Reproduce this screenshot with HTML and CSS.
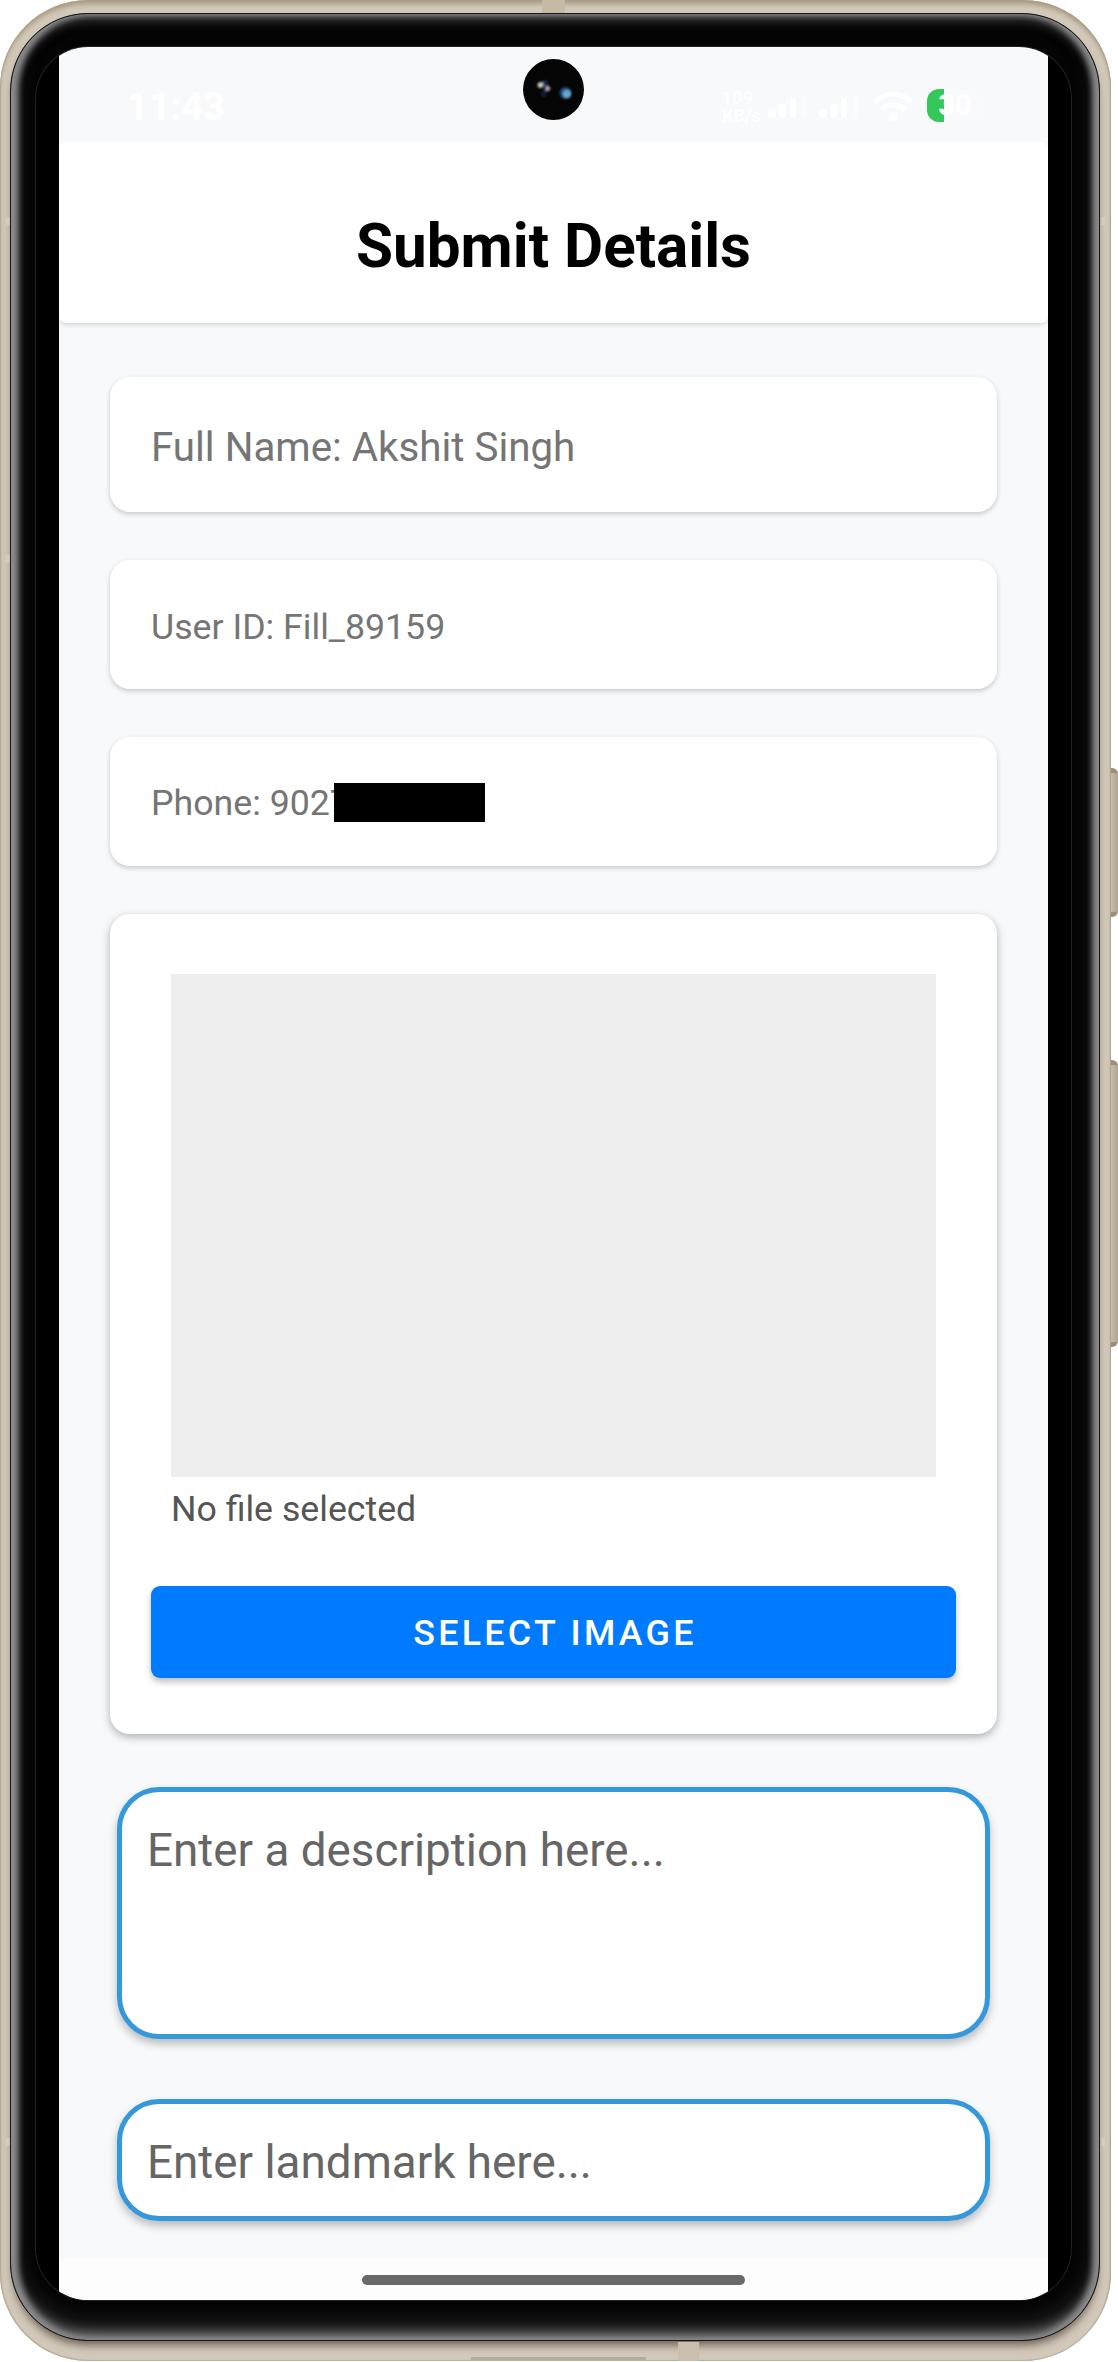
FILE: index.html
```html
<!DOCTYPE html>
<html lang="en">
<head>
<meta charset="utf-8">
<title>Submit Details</title>
<link rel="stylesheet" href="styles.css">
</head>
<body>
<div class="phone">
  <i class="key key-power"></i>
  <i class="key key-volume"></i>
  <i class="band band-top"></i>
  <i class="band band-bottom"></i>
  <i class="band band-port"></i>
  <i class="notch notch-l1"></i><i class="notch notch-l2"></i><i class="notch notch-l3"></i>
  <i class="notch notch-r1"></i><i class="notch notch-r3"></i>
  <div class="bezel">
    <div class="glass">
      <div class="screen">
        <div class="status">
          <span class="clock">11:43</span>
          <div class="indicators">
            <span class="speed">109<br>KB/s</span>
            <svg class="signal" width="40" height="26" viewBox="0 0 40 26"><rect x="0" y="15" width="8" height="9" rx="4"/><rect x="11" y="10" width="7" height="14" rx="3"/><rect x="22" y="4" width="6" height="20" rx="3"/><rect class="dim" x="34" y="0" width="5" height="24" rx="2.500"/></svg>
            <svg class="signal" width="40" height="26" viewBox="0 0 40 26"><rect x="0" y="15" width="8" height="9" rx="4"/><rect x="11" y="10" width="7" height="14" rx="3"/><rect x="22" y="4" width="6" height="20" rx="3"/><rect class="dim" x="34" y="0" width="5" height="24" rx="2.500"/></svg>
            <svg class="wifi" width="42" height="32" viewBox="0 0 42 32"><g fill="none" stroke="#fff" stroke-width="5"><path d="M2 11Q21-5 40 11"/><path d="M9 19Q21 8 33 19"/></g><circle cx="21" cy="25.500" r="4.500" fill="#fff"/></svg>
            <span class="battery">30</span>
          </div>
          <svg class="camera" width="61" height="61" viewBox="0 0 61 61">
            <defs><filter id="soft"><feGaussianBlur stdDeviation="1.3"/></filter></defs>
            <circle cx="30.5" cy="30.5" r="30.5" fill="#050505"/>
            <g filter="url(#soft)"><circle cx="22" cy="24" r="3" fill="#14284f"/><circle cx="21" cy="35" r="3" fill="#0d1d40"/><circle cx="17.500" cy="26" r="3" fill="#b6c6be"/><circle cx="24.500" cy="29.500" r="2.800" fill="#a596b4"/><circle cx="42.500" cy="34" r="6" fill="#234a80"/><circle cx="44" cy="35" r="4" fill="#66a9d0"/></g>
          </svg>
        </div>
        <header class="header"><h1>Submit Details</h1></header>
        <main class="content">
          <div class="card card-name">Full Name: Akshit Singh</div>
          <div class="card">User ID: Fill_89159</div>
          <div class="card card-phone">Phone: <span class="number">9027<i class="redact"></i></span></div>
          <section class="card upload">
            <div class="preview"></div>
            <p class="file">No file selected</p>
            <button class="select">SELECT IMAGE</button>
          </section>
          <div class="field description">Enter a description here...</div>
          <div class="field">Enter landmark here...</div>
        </main>
        <div class="nav"><i class="handle"></i></div>
      </div>
    </div>
  </div>
</div>
</body>
</html>
```
FILE: styles.css
```css
* { box-sizing: border-box; }
body { margin: 0; background: #fff; font-family: Roboto, "Liberation Sans", sans-serif; }
i { display: block; }

.phone {
  position: relative;
  width: 1111px;
  height: 2361px;
  padding: 13px 11px 20px 10px;
  border-radius: 88px;
  background: #d2c9ba;
  box-shadow: inset 0 5px 5px -1px #a99a80, inset 1px -1px 1px #b8ad9b, inset -1px 0 1px #b3a692;
}
.bezel {
  height: 2328px;
  padding: 33px 28px 40px 25px;
  border: 1px solid #171717;
  border-radius: 78px;
  background: #040404;
  box-shadow: 0 7px 8px -3px rgba(60,50,38,.7), inset 7px 0 6px #8c8c8c, inset -6px 0 6px #8c8c8c, inset 0 -7px 12px #7c7c7c, inset 0 -14px 24px #303030, inset 0 6px 12px #464444;
}
.glass {
  height: 2253px;
  padding: 0 23px;
  border-radius: 52px;
  background: #000;
  overflow: hidden;
  box-shadow: 0 0 0 1px #222;
}
.screen { display: flex; flex-direction: column; height: 100%; background: #f8f9fb; }

.key { position: absolute; left: 1111px; width: 7px; border-radius: 0 6px 6px 0; background: linear-gradient(90deg, #c5bbab, #b0a591); border-top: 5px solid #9c8e78; border-bottom: 5px solid #9c8e78; }
.key-power { top: 768px; height: 149px; }
.key-volume { top: 1060px; height: 287px; }
.band { position: absolute; background: #c6baa5; }
.band-top { left: 542px; top: 0; width: 23px; height: 13px; }
.band-bottom { left: 678px; top: 2342px; width: 21px; height: 19px; background: #cabfae; }
.band-port { left: 471px; top: 2357px; width: 175px; height: 3px; background: #b5ab9b; }
.notch { position: absolute; width: 4px; height: 8px; background: #ded6c9; opacity: .5; }
.notch-l1, .notch-r1 { top: 217px; }
.notch-l2 { top: 555px; }
.notch-l3, .notch-r3 { top: 2138px; }
.notch-l1, .notch-l2, .notch-l3 { left: 6px; }
.notch-r1, .notch-r3 { left: 1101px; }

.status { position: relative; flex: none; display: flex; justify-content: space-between; height: 95px; padding: 40px 65px 0 68px; color: #fff; }
.clock { font-size: 38px; line-height: 40px; font-weight: 700; }
.indicators { display: flex; align-items: flex-start; height: 36px; }
.speed { width: 46px; font-size: 18px; line-height: 18px; font-weight: 700; padding-top: 2px; }
.signal { margin: 7px 11px 0 0; fill: #fff; }
.signal .dim { opacity: .4; }
.wifi { margin: 4px 13px 0 2px; }
.battery { width: 56px; height: 33px; margin-top: 2px; border-radius: 12px; background: linear-gradient(90deg, #34c759 17px, #f9fafc 17px); font-size: 29px; line-height: 33px; font-weight: 700; text-align: center; }
.camera { position: absolute; left: 464px; top: 12px; }

.header { flex: none; display: flex; align-items: center; justify-content: center; height: 181px; padding-top: 28px; border-radius: 7px; background: #fff; box-shadow: 0 3px 4px -1px rgba(0,0,0,.14); }
h1 { margin: 0; font-size: 60.2px; line-height: 70px; font-weight: 700; color: #000; }

.content { flex: 1; padding: 54px 51px 0; }
.card { height: 129px; margin-bottom: 48px; padding: 44px 41px 0; border-radius: 20px; background: #fff; box-shadow: 0 2px 5px rgba(0,0,0,.2); color: #757575; font-size: 35.7px; line-height: 46px; }
.card-name { height: 135px; padding-top: 48px; font-size: 40.3px; }
.card-phone { padding-top: 43px; }
.number { position: relative; }
.redact { position: absolute; left: 64px; top: 1px; width: 151px; height: 39px; background: #000; }
.upload { height: 820px; margin-bottom: 53px; padding: 60px 41px 0; box-shadow: 0 3px 8px rgba(0,0,0,.3); }
.preview { height: 503px; margin: 0 20px; background: #eee; }
.file { margin: 9px 20px 0; color: #555; line-height: 46px; }
.select { display: block; width: 100%; height: 92px; margin-top: 54px; padding: 2px 0 0 3px; border: 0; border-radius: 9px; background: #007bff; box-shadow: 0 4px 6px rgba(0,0,0,.25); color: #fff; font: 500 35.8px/90px Roboto, sans-serif; letter-spacing: 3.3px; }
.field { height: 122px; margin: 0 7px; padding: 32px 25px 0; border: 5px solid #3498db; border-radius: 42px; background: #fff; box-shadow: 0 5px 9px rgba(0,0,0,.25); color: #666; font-size: 45.8px; line-height: 54px; }
.description { height: 252px; margin-bottom: 60px; }

.nav { flex: none; display: flex; justify-content: center; height: 41px; padding-top: 16px; background: #fdfdfd; }
.handle { width: 383px; height: 10px; border-radius: 5px; background: #696969; }
```
